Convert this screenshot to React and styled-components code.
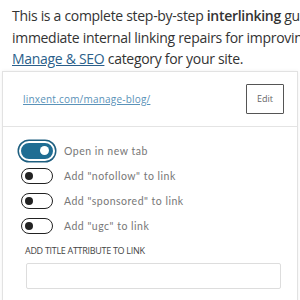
import React from 'react';
import styled, {createGlobalStyle} from 'styled-components';

const GlobalStyle = createGlobalStyle`
  html, body {
    margin: 0;
    padding: 0;
    background: #fff;
    overflow: hidden;
  }
  body {
    font-family: "Open Sans", "Noto Sans", sans-serif;
  }
`;

const Page = styled.div`
  width: 300px;
  height: 300px;
  overflow: hidden;
  position: relative;
`;

const Intro = styled.div`
  padding: 5px 0 0 12px;
  font-size: 14px;
  line-height: 21.5px;
  color: #333;
  white-space: nowrap;
  letter-spacing: -0.3px;
  b {
    font-weight: 600;
  }
  a {
    color: #2b5f8a;
    text-decoration: underline;
  }
`;

const Panel = styled.div`
  margin: 1px 2px 0 2px;
  border: 1px solid #e2e2e2;
  border-bottom: none;
  box-shadow: 0 0 4px rgba(0,0,0,0.06);
  height: 240px;
`;

const LinkRow = styled.div`
  display: flex;
  align-items: center;
  justify-content: space-between;
  padding: 12px 13px 12px 20px;
  border-bottom: 1px solid #e4e4e4;
  height: 30px;
`;

const UrlLink = styled.a`
  font-size: 10px;
  color: #5a92b8;
  text-decoration: underline;
  letter-spacing: 0.2px;
`;

const EditButton = styled.button`
  width: 38px;
  height: 30px;
  border: 1px solid #555;
  background: #fff;
  border-radius: 1px;
  font-size: 9px;
  color: #666;
  font-family: inherit;
  padding: 0;
`;

const Settings = styled.div`
  padding: 12px 20px 0 16px;
  display: flex;
  flex-direction: column;
`;

const ToggleRow = styled.div`
  display: flex;
  align-items: center;
  gap: 9px;
  height: 25px;
`;

const Track = styled.span`
  box-sizing: border-box;
  width: ${p => p.on ? 36 : 32}px;
  height: ${p => p.on ? 20 : 16}px;
  margin: ${p => p.on ? 0 : '0 2px'};
  border-radius: 10px;
  border: ${p => p.on ? '2px solid #fff' : '1.5px solid #222'};
  box-shadow: ${p => p.on ? '0 0 0 1.5px #1e5f80' : 'none'};
  background: ${p => p.on ? '#1f6d93' : '#fff'};
  position: relative;
  flex-shrink: 0;
  &::after {
    content: '';
    position: absolute;
    top: ${p => p.on ? 3 : 2.5}px;
    ${p => p.on ? 'right: 4px;' : 'left: 3px;'}
    width: ${p => p.on ? 9 : 8}px;
    height: ${p => p.on ? 9 : 8}px;
    border-radius: 50%;
    background: ${p => p.on ? '#fff' : '#222'};
  }
`;

const ToggleLabel = styled.span`
  font-family: "Lato", "Open Sans", sans-serif;
  font-size: 10.5px;
  color: #777;
  letter-spacing: 0.5px;
`;

const FieldLabel = styled.div`
  font-size: 9px;
  color: #444;
  text-transform: uppercase;
  letter-spacing: -0.3px;
  margin: 5px 0 0 6px;
`;

const TitleInput = styled.input`
  box-sizing: border-box;
  margin: 6px 0 0 7px;
  width: 255px;
  height: 26px;
  border: 1px solid #ddd;
  border-radius: 2px;
  outline: none;
`;

const toggles = [
  {label: 'Open in new tab', on: true},
  {label: 'Add "nofollow" to link'},
  {label: 'Add "sponsored" to link'},
  {label: 'Add "ugc" to link'},
];

export default function App() {
  return (
    <Page>
      <GlobalStyle />
      <Intro>
        <div>This is a complete step-by-step <b>interlinking</b> guide with</div>
        <div>immediate internal linking repairs for improving your</div>
        <div><a href="#">Manage &amp; SEO</a> category for your site.</div>
      </Intro>
      <Panel>
        <LinkRow>
          <UrlLink href="#">linxent.com/manage-blog/</UrlLink>
          <EditButton>Edit</EditButton>
        </LinkRow>
        <Settings>
          {toggles.map(t => (
            <ToggleRow key={t.label}>
              <Track on={t.on ? 1 : 0} />
              <ToggleLabel>{t.label}</ToggleLabel>
            </ToggleRow>
          ))}
          <FieldLabel>Add title attribute to link</FieldLabel>
          <TitleInput />
        </Settings>
      </Panel>
    </Page>
  );
}
